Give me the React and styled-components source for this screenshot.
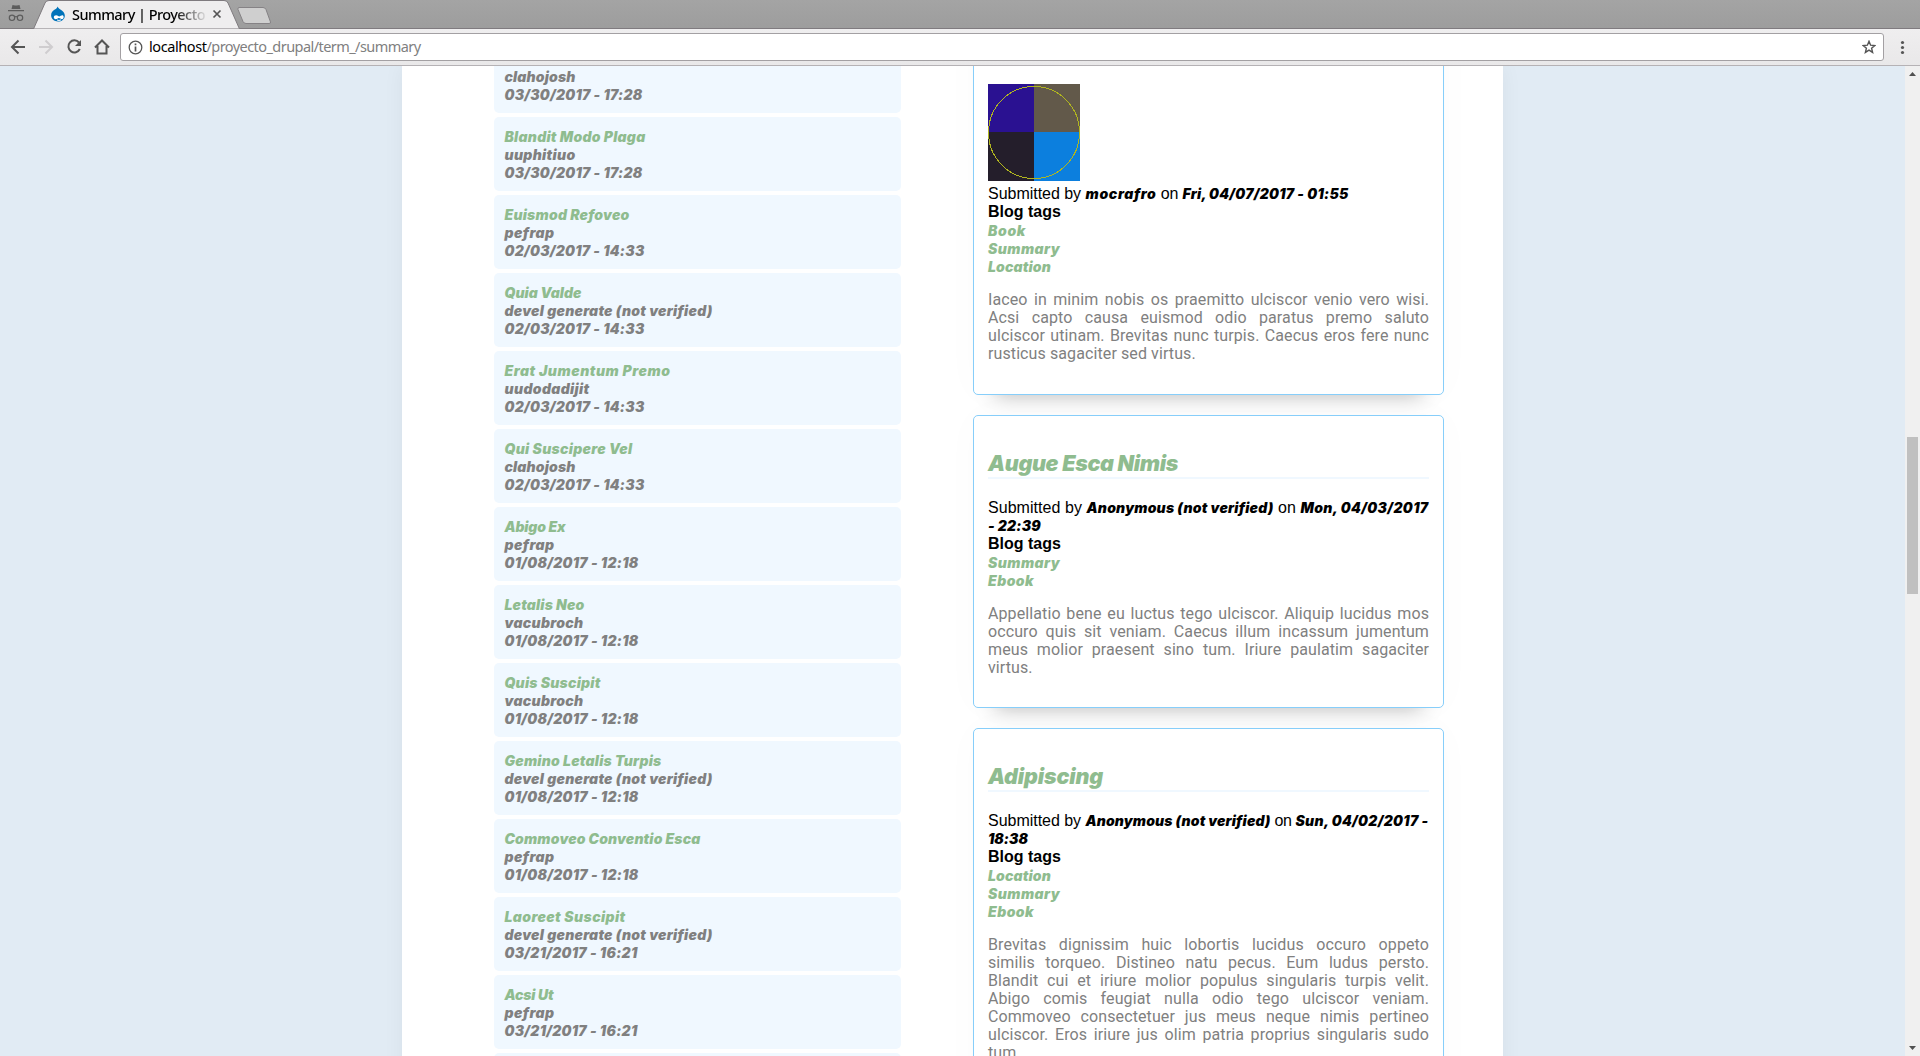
import React, { useLayoutEffect, useRef, useState } from "react";
import styled, { createGlobalStyle } from "styled-components";

const Global = createGlobalStyle`
  * { box-sizing: border-box; }
  html, body { margin: 0; height: 100%; overflow: hidden; }
  body { font-family: "Liberation Sans", Arial, sans-serif; font-size: 16px; line-height: 18px; color: #000; }
`;

const Fitted = styled.span`
  white-space: pre;
`;

/* Tracks the text so that it spans a given number of pixels. */
function Fit({ width, children }) {
  const ref = useRef(null);
  const [spacing, setSpacing] = useState(0);
  useLayoutEffect(() => {
    const natural = ref.current.getBoundingClientRect().width;
    setSpacing((width - natural) / children.length);
  }, [width, children]);
  return <Fitted ref={ref} style={{ letterSpacing: spacing + "px" }}>{children}</Fitted>;
}

const Window = styled.div`
  display: flex;
  flex-direction: column;
  width: 1920px;
  height: 1056px;
  overflow: hidden;
`;
const TabStrip = styled.div`
  flex: none;
  display: flex;
  height: 29px;
  background: linear-gradient(#a4a4a4, #9d9d9d);
  border-bottom: 1px solid #7f7b7f;
`;
const StripArt = styled.svg`
  display: block;
  flex: none;
`;
const TabSlot = styled.div`
  display: grid;
  width: 280px;
  height: 29px;
  > * { grid-area: 1 / 1; }
`;
const TabContent = styled.div`
  display: flex;
  align-items: center;
  height: 29px;
  padding: 0 0 1px 50px;
  font-family: "Noto Sans", sans-serif;
  font-size: 14.5px;
  font-weight: 500;
`;
const TabTitle = styled.div`
  width: 142px;
  padding-left: 6px;
  white-space: nowrap;
  mask-image: linear-gradient(90deg, #000 108px, transparent 142px);
`;
const TabClose = styled.svg`
  margin-left: 4px;
`;
const Toolbar = styled.div`
  flex: none;
  display: flex;
  align-items: center;
  height: 37px;
  padding: 0 9px 0 0;
  background: linear-gradient(#efeeef, #e9e8e9);
  border-bottom: 1px solid #b5b2b5;
`;
const NavIcons = styled.svg`
  flex: none;
  display: block;
`;
const AddressBar = styled.div`
  flex: none;
  display: flex;
  align-items: center;
  width: 1764px;
  height: 28px;
  padding: 0 7px 0 7px;
  background: #fff;
  border: 1px solid #a3a0a3;
  border-radius: 3px;
`;
const Url = styled.div`
  flex: 1;
  padding: 0 0 2px 6px;
  font-family: "Noto Sans", sans-serif;
  font-size: 14.5px;
  color: #808080;
  white-space: nowrap;
  b { font-weight: 400; color: #000; }
`;
const Viewport = styled.div`
  flex: 1;
  display: flex;
  min-height: 0;
`;
const Body = styled.div`
  flex: 1;
  display: flex;
  justify-content: center;
  overflow: hidden;
  background: #e1ebf4;
`;
const Page = styled.div`
  display: flex;
  align-items: flex-start;
  width: 1101px;
  height: 1200px;
  padding-left: 92px;
  background: #fff;
  box-shadow: 0 0 20px rgba(0, 0, 0, 0.05);
`;
const List = styled.div`
  display: flex;
  flex-direction: column;
  gap: 4px;
  width: 407px;
  margin-top: -27px;
`;
const Entry = styled.article`
  height: 74px;
  padding: 10px 10px 10px 10.5px;
  border-radius: 5px;
  background: #f0f8ff;
  color: #808080;
`;
const Racing = styled.div`
  height: 18px;
  font: italic 900 14px/20px Inter, sans-serif;
  white-space: nowrap;
  color: ${(p) => (p.$link ? "#8fbc8f" : "inherit")};
`;
const Cards = styled.div`
  display: flex;
  flex-direction: column;
  gap: 20px;
  width: 471px;
  margin: -60px 0 0 72px;
`;
const Card = styled.article`
  position: relative;
  height: ${(p) => p.$height}px;
  padding: ${(p) => p.$top || 14}px 14px 14px;
  border: 1px solid #87cefa;
  border-radius: 5px;
  background: #fff;
  box-shadow: 0 22px 20px -22px rgba(0, 0, 0, 0.28), 0 0 40px rgba(0, 0, 0, 0.02);
`;
const Title = styled.h2`
  height: 29px;
  margin: 20px 0;
  border-bottom: 2px solid #f0f8ff;
  font: italic 900 21.5px/27px Inter, sans-serif;
  white-space: nowrap;
  color: #8fbc8f;
`;
const Line = styled.div`
  height: 18px;
  white-space: pre;
`;
const Em = styled.em`
  font: italic 900 14px/1px Inter, sans-serif;
`;
const Label = styled.div`
  height: 18px;
  font-weight: 700;
`;
const Text = styled.p`
  margin: 16px 0 0;
  font-family: Roboto, sans-serif;
  letter-spacing: 0.1px;
  color: #808080;
`;
const TextLine = styled.span`
  display: block;
  height: 18px;
  white-space: nowrap;
  text-align: ${(p) => (p.$last ? "left" : "justify")};
  text-align-last: ${(p) => (p.$last ? "left" : "justify")};
`;
const Photo = styled.svg`
  display: block;
  margin-bottom: 4px;
`;
const Scrollbar = styled.div`
  display: flex;
  flex-direction: column;
  align-items: center;
  width: 15px;
  background: #f0f0f0;
`;
const Thumb = styled.div`
  flex: none;
  width: 11px;
  height: 157px;
  margin: 356px 0 446px;
  background: #c0c0c0;
`;
const Arrow = styled.svg`
  flex: none;
`;

const entries = [
  ["Abdo", 40, "clahojosh", 71, "03/30/2017 - 17:28", 138],
  ["Blandit Modo Plaga", 141, "uuphitiuo", 71, "03/30/2017 - 17:28", 138],
  ["Euismod Refoveo", 125, "pefrap", 50, "02/03/2017 - 14:33", 140],
  ["Quia Valde", 77, "devel generate (not verified)", 208, "02/03/2017 - 14:33", 140],
  ["Erat Jumentum Premo", 166, "uudodadijit", 85, "02/03/2017 - 14:33", 140],
  ["Qui Suscipere Vel", 128, "clahojosh", 71, "02/03/2017 - 14:33", 140],
  ["Abigo Ex", 61, "pefrap", 50, "01/08/2017 - 12:18", 134],
  ["Letalis Neo", 80, "vacubroch", 79, "01/08/2017 - 12:18", 134],
  ["Quis Suscipit", 96, "vacubroch", 79, "01/08/2017 - 12:18", 134],
  ["Gemino Letalis Turpis", 157, "devel generate (not verified)", 208, "01/08/2017 - 12:18", 134],
  ["Commoveo Conventio Esca", 196, "pefrap", 50, "01/08/2017 - 12:18", 134],
  ["Laoreet Suscipit", 121, "devel generate (not verified)", 208, "03/21/2017 - 16:21", 133],
  ["Acsi Ut", 49, "pefrap", 50, "03/21/2017 - 16:21", 133],
  ["", 0, "", 0, "", 0],
];

const tagWidths = { Book: 38, Summary: 72, Location: 63, Ebook: 46 };

const posts = [
  {
    height: 389,
    top: 77,
    photo: true,
    lines: [[["Submitted by ", 97.5], ["mocrafro", 71, 1], [" on ", 26], ["Fri, 04/07/2017 - 01:55", 166, 1]]],
    tags: ["Book", "Summary", "Location"],
    text: [
      "Iaceo in minim nobis os praemitto ulciscor venio vero wisi.",
      "Acsi capto causa euismod odio paratus premo saluto",
      "ulciscor utinam. Brevitas nunc turpis. Caecus eros fere nunc",
      "rusticus sagaciter sed virtus.",
    ],
  },
  {
    height: 293,
    title: ["Augue Esca Nimis", 190],
    lines: [
      [["Submitted by ", 98.5], ["Anonymous (not verified)", 187, 1], [" on ", 27], ["Mon, 04/03/2017", 128, 1]],
      [["- 22:39", 53, 1]],
    ],
    tags: ["Summary", "Ebook"],
    text: [
      "Appellatio bene eu luctus tego ulciscor. Aliquip lucidus mos",
      "occuro quis sit veniam. Caecus illum incassum jumentum",
      "meus molior praesent sino tum. Iriure paulatim sagaciter",
      "virtus.",
    ],
  },
  {
    height: 420,
    title: ["Adipiscing", 115],
    lines: [
      [["Submitted by ", 97.5], ["Anonymous (not verified)", 185, 1], [" on ", 25], ["Sun, 04/02/2017 -", 133, 1]],
      [["18:38", 40, 1]],
    ],
    tags: ["Location", "Summary", "Ebook"],
    text: [
      "Brevitas dignissim huic lobortis lucidus occuro oppeto",
      "similis torqueo. Distineo natu pecus. Eum ludus persto.",
      "Blandit cui et iriure molior populus singularis turpis velit.",
      "Abigo comis feugiat nulla odio tego ulciscor veniam.",
      "Commoveo consectetuer jus meus neque nimis pertineo",
      "ulciscor. Eros iriure jus olim patria proprius singularis sudo",
      "tum.",
    ],
  },
];

function Post({ post }) {
  return (
    <Card $height={post.height} $top={post.top}>
      {post.title && <Title><Fit width={post.title[1]}>{post.title[0]}</Fit></Title>}
      {post.photo && (
        <Photo width="92" height="97" shapeRendering="crispEdges">
          <rect width="46" height="48" fill="#2a1191" />
          <rect x="46" width="46" height="48" fill="#62594a" />
          <rect y="48" width="46" height="49" fill="#241e2b" />
          <rect x="46" y="48" width="46" height="49" fill="#0c7fde" />
          <ellipse cx="46" cy="48.5" rx="45.5" ry="46" fill="none" stroke="#b0b51f" />
        </Photo>
      )}
      {post.lines.map((line, i) => (
        <Line key={i}>
          {line.map(([text, width, em]) =>
            em ? <Em key={text}><Fit width={width}>{text}</Fit></Em> : <Fit key={text} width={width}>{text}</Fit>
          )}
        </Line>
      ))}
      <Label>Blog tags</Label>
      {post.tags.map((tag) => (
        <Racing key={tag} $link><Fit width={tagWidths[tag]}>{tag}</Fit></Racing>
      ))}
      <Text>
        {post.text.map((line, i) => (
          <TextLine key={line} $last={i === post.text.length - 1}>{line}</TextLine>
        ))}
      </Text>
    </Card>
  );
}

export default function App() {
  return (
    <Window>
      <Global />
      <TabStrip>
        <TabSlot>
          <StripArt width="280" height="29">
            <path d="M33.5 29 L45 3 Q46 0.5 49 0.5 H224 Q227 0.5 228 3 L239.500 29 Z" fill="#efeeef" stroke="#7f7b7f" />
            <path d="M239 7.500 H263 Q265 7.500 266 9.500 L270.500 22 Q271 23.500 269 23.500 H246 Q244 23.500 243 21.500 L238 9.500 Q237.500 7.500 239 7.500 Z" fill="#cfcfcf" stroke="#858285" />
            <g fill="#5c5c5c">
              <path d="M12.500 5 L15 5.500 H17 L19.500 5 L20.500 9 H11.500 Z M8 10 H24 V11.300 H8 Z" />
            </g>
            <g fill="none" stroke="#5c5c5c" strokeWidth="1.200">
              <circle cx="12" cy="17.800" r="2.700" /><circle cx="20" cy="17.800" r="2.700" /><path d="M14.600 17 Q16 16 17.400 17" />
            </g>
          </StripArt>
          <TabContent>
            <svg width="16" height="16" viewBox="0 0 16 16">
              <path d="M7.500 0.500 C8.500 2.500 10 3 11.500 4.200 C13.800 5.800 14.800 7.600 14.800 9.700 C14.800 13.200 11.600 15.500 8 15.500 C4.200 15.500 1.100 12.800 1.100 9.300 C1.100 6.500 2.800 4.800 4.800 3.600 C6.300 2.700 7.200 2 7.500 0.500Z" fill="#0073ba" />
              <path d="M3.800 11.300 C3.800 9.300 6.500 8.500 8.500 10.300 C10 11 11.500 8.700 13 9.500 C14.300 10.500 13.500 13.200 12 13.200 C10.700 13.200 10 12 8.800 12.100 C7.600 12.300 7 13.200 5.800 13.200 C4.500 13.200 3.800 12.400 3.800 11.300Z" fill="#fff" />
              <path d="M7 14 Q9 15 11 13.900" fill="none" stroke="#fff" />
            </svg>
            <TabTitle><Fit width={133}>Summary | Proyecto</Fit></TabTitle>
            <TabClose width="10" height="10"><path d="M1.500 1.500 L8.500 8.500 M8.500 1.500 L1.500 8.500" stroke="#555" strokeWidth="1.700" /></TabClose>
          </TabContent>
        </TabSlot>
      </TabStrip>
      <Toolbar>
        <NavIcons width="120" height="36" fill="none" stroke="#555" strokeWidth="2">
          <path d="M25 18 H12.500 M18.500 11.500 L12 18 L18.500 24.500" />
          <path d="M39 18 H51.500 M45.500 11.500 L52 18 L45.500 24.500" stroke="#cfcdcf" />
          <path d="M79 13.500 A6 6 0 1 0 79.800 20" />
          <path d="M81 11 V17 H75 Z" fill="#555" stroke="none" />
          <path d="M95 18.500 L102 11.500 L109 18.500 M97.500 17 V24.500 H106.500 V17" />
        </NavIcons>
        <AddressBar>
          <svg width="15" height="15"><circle cx="7.500" cy="7.500" r="6.300" fill="none" stroke="#555" strokeWidth="1.300" /><path d="M7.500 3.500 V5.200 M7.500 6.500 V11.500" stroke="#555" strokeWidth="1.700" /></svg>
          <Url><b><Fit width={57.5}>localhost</Fit></b><Fit width={214}>/proyecto_drupal/term_/summary</Fit></Url>
          <svg width="14" height="14"><path d="M7 1.300 L8.600 5.200 L12.800 5.500 L9.600 8.200 L10.600 12.400 L7 10.100 L3.400 12.400 L4.400 8.200 L1.200 5.500 L5.400 5.200 Z" fill="none" stroke="#555" strokeWidth="1.400" /></svg>
        </AddressBar>
        <svg width="36" height="20" fill="#555"><circle cx="18.500" cy="5.500" r="1.600" /><circle cx="18.500" cy="10.500" r="1.600" /><circle cx="18.500" cy="15.500" r="1.600" /></svg>
      </Toolbar>
      <Viewport>
        <Body>
          <Page>
            <List>
              {entries.map(([title, tw, user, uw, date, dw], i) => (
                <Entry key={i}>
                  {title && (
                    <>
                      <Racing $link><Fit width={tw}>{title}</Fit></Racing>
                      <Racing><Fit width={uw}>{user}</Fit></Racing>
                      <Racing><Fit width={dw}>{date}</Fit></Racing>
                    </>
                  )}
                </Entry>
              ))}
            </List>
            <Cards>
              {posts.map((post, i) => <Post key={i} post={post} />)}
            </Cards>
          </Page>
        </Body>
        <Scrollbar>
          <Arrow width="15" height="15"><path d="M4 10 L7.500 6 L11 10 Z" fill="#505050" /></Arrow>
          <Thumb />
          <Arrow width="15" height="15"><path d="M4 6 L7.500 10 L11 6 Z" fill="#505050" /></Arrow>
        </Scrollbar>
      </Viewport>
    </Window>
  );
}
